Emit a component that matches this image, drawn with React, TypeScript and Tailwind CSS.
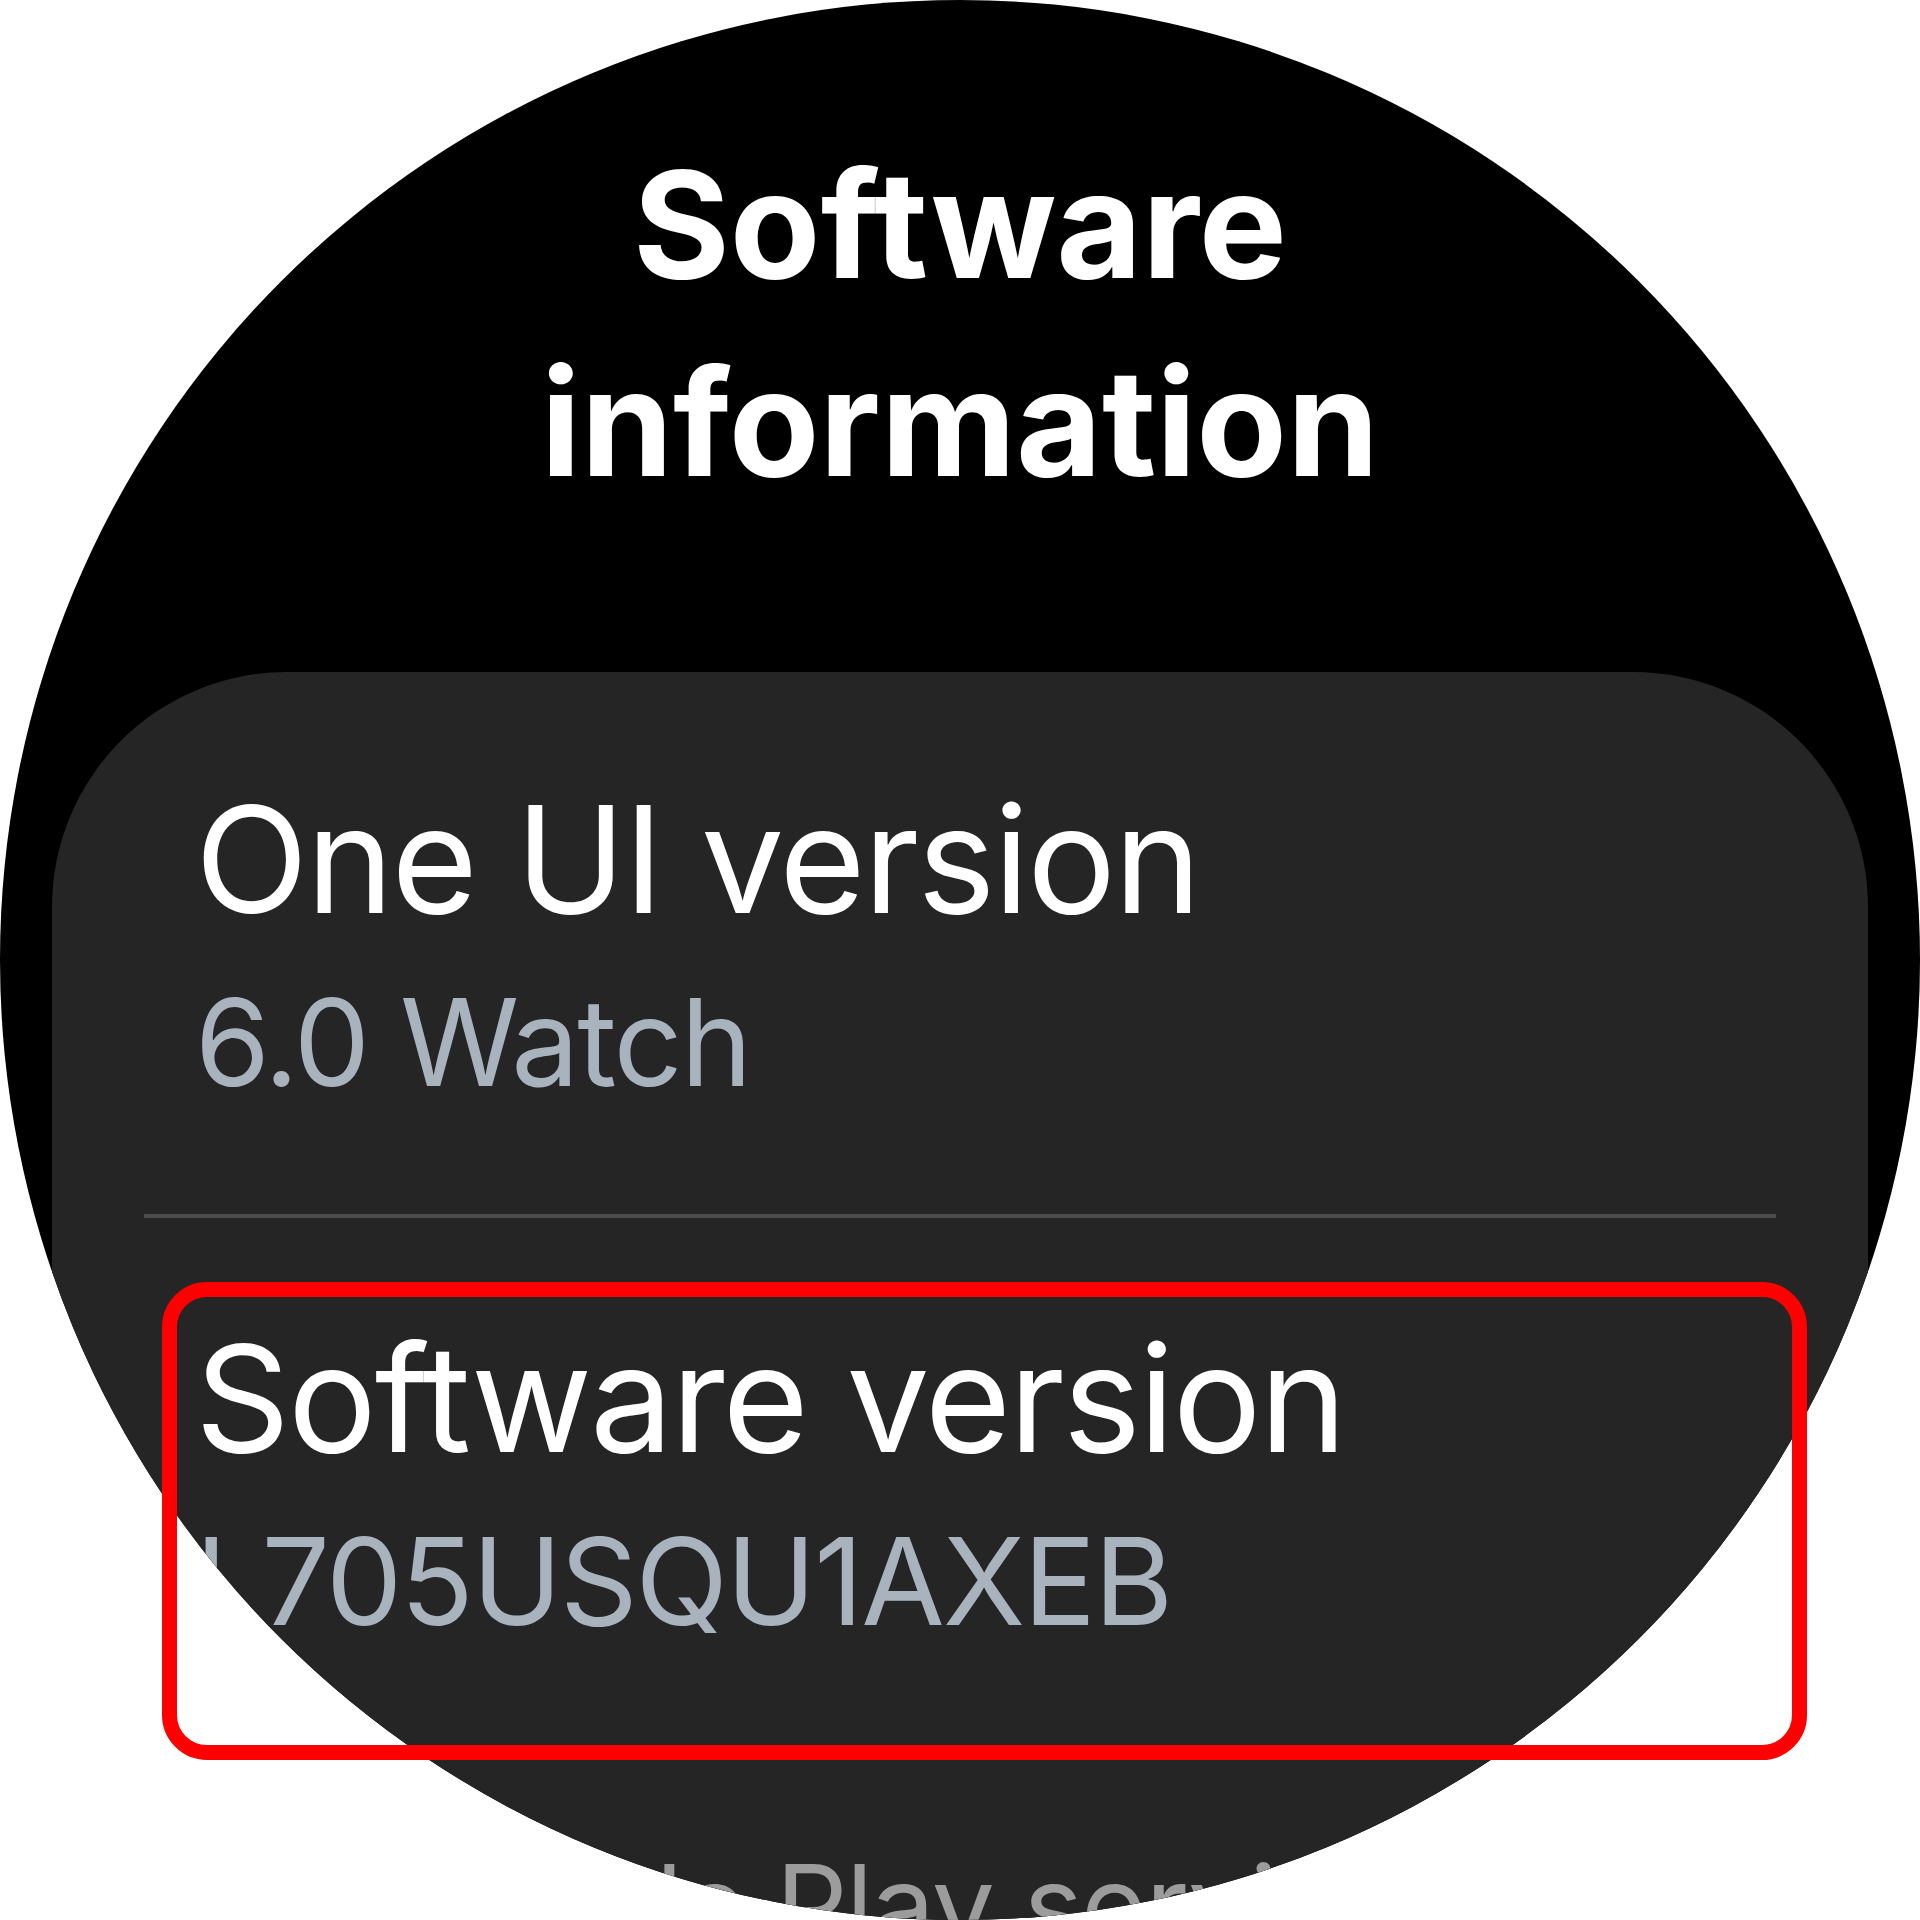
import React from "react"

type InfoItem = {
  label: string
  value?: string
}

const items: InfoItem[] = [
  { label: "One UI version", value: "6.0 Watch" },
  { label: "Software version", value: "L705USQU1AXEB" },
]

function InfoRow({ label, value }: InfoItem) {
  return (
    <div className="pl-[143px] pr-[92px]">
      <div className="text-[148px] leading-[176px] tracking-[-2px] text-white whitespace-nowrap">{label}</div>
      {value && (
        <div className="mt-[21px] text-[121px] leading-[146px] tracking-[-2px] text-[#a9b3be] whitespace-nowrap">
          {value}
        </div>
      )}
    </div>
  )
}

export default function App() {
  return (
    <div
      className="relative w-[1920px] h-[1920px] bg-white overflow-hidden"
      style={{ fontFamily: "Inter, 'Noto Sans', sans-serif" }}
    >
      {/* watch face */}
      <div className="w-[1920px] h-[1920px] rounded-full bg-black overflow-hidden flex flex-col items-center">
        <h1 className="pt-[126px] text-center text-[148px] leading-[198px] font-bold text-white">
          Software
          <br />
          information
        </h1>

        <div className="mt-[150px] w-[1816px] flex-1 rounded-t-[235px] bg-[#252525] pt-[100px]">
          <InfoRow {...items[0]} />
          <div className="mx-[92px] mt-[99px] h-[4px] bg-[#4d4d4d]" />
          <div className="mt-[93px]">
            <InfoRow {...items[1]} />
          </div>
          <div className="mx-[92px] mt-[99px] h-[4px] bg-[#4d4d4d]" />
          {/* next row shrinks as it nears the bottom edge of the round screen */}
          <div className="mt-[82px] scale-[0.76] origin-top pl-[137px] text-[148px] leading-[176px] tracking-[-2px] text-[#9c9c9c] whitespace-nowrap">
            Google Play services
          </div>
        </div>
      </div>

      {/* highlight annotation */}
      <div className="absolute left-[162px] top-[1282px] w-[1645px] h-[478px] rounded-[45px] border-[15px] border-[#ff0000]" />
    </div>
  )
}
